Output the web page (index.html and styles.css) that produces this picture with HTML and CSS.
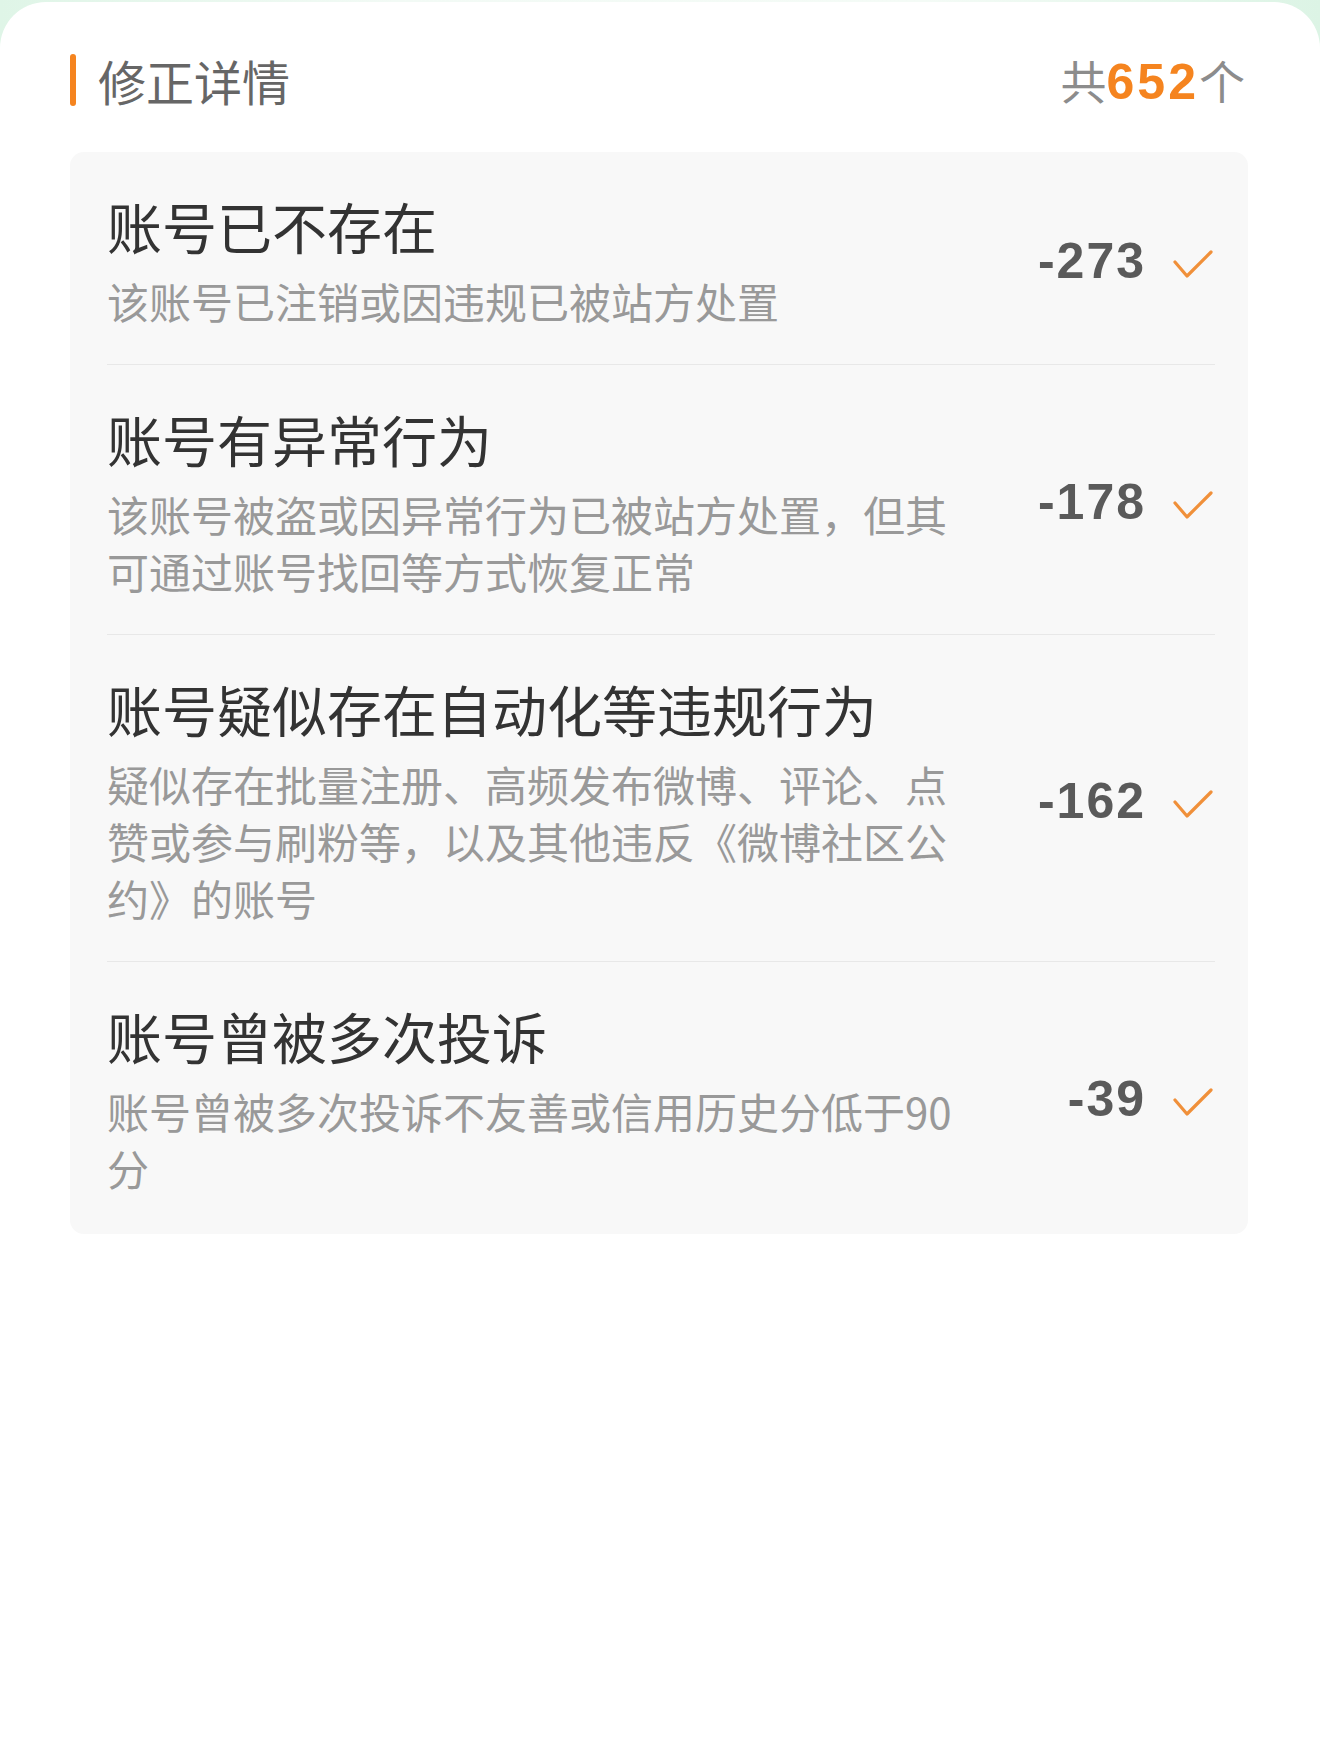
FILE: index.html
```html
<!DOCTYPE html>
<html lang="zh-CN">
<head>
<meta charset="utf-8">
<title>修正详情</title>
<link rel="stylesheet" href="styles.css">
</head>
<body>
<div class="page">
  <div class="header">
    <div class="header-left">
      <span class="bar"></span>
      <span class="header-title">修正详情</span>
    </div>
    <div class="header-right">共<span class="total">652</span>个</div>
  </div>
  <div class="card">
    <div class="row">
      <div class="text">
        <div class="title">账号已不存在</div>
        <div class="desc">该账号已注销或因违规已被站方处置</div>
      </div>
      <div class="value"><span class="num">-273</span><svg class="check" width="40" height="28" viewBox="0 0 40 28"><polyline points="2,12 14,26 38,2" fill="none" stroke="#f0903a" stroke-width="3.2" stroke-linecap="round" stroke-linejoin="round"/></svg></div>
    </div>
    <div class="row">
      <div class="text">
        <div class="title">账号有异常行为</div>
        <div class="desc">该账号被盗或因异常行为已被站方处置，但其可通过账号找回等方式恢复正常</div>
      </div>
      <div class="value"><span class="num">-178</span><svg class="check" width="40" height="28" viewBox="0 0 40 28"><polyline points="2,12 14,26 38,2" fill="none" stroke="#f0903a" stroke-width="3.2" stroke-linecap="round" stroke-linejoin="round"/></svg></div>
    </div>
    <div class="row">
      <div class="text">
        <div class="title">账号疑似存在自动化等违规行为</div>
        <div class="desc">疑似存在批量注册、高频发布微博、评论、点赞或参与刷粉等，以及其他违反《微博社区公约》的账号</div>
      </div>
      <div class="value"><span class="num">-162</span><svg class="check" width="40" height="28" viewBox="0 0 40 28"><polyline points="2,12 14,26 38,2" fill="none" stroke="#f0903a" stroke-width="3.2" stroke-linecap="round" stroke-linejoin="round"/></svg></div>
    </div>
    <div class="row">
      <div class="text">
        <div class="title">账号曾被多次投诉</div>
        <div class="desc">账号曾被多次投诉不友善或信用历史分低于90分</div>
      </div>
      <div class="value"><span class="num">-39</span><svg class="check" width="40" height="28" viewBox="0 0 40 28"><polyline points="2,12 14,26 38,2" fill="none" stroke="#f0903a" stroke-width="3.2" stroke-linecap="round" stroke-linejoin="round"/></svg></div>
    </div>
  </div>
</div>
</body>
</html>
```
FILE: styles.css
```css
html, body {
  margin: 0;
  padding: 0;
}
body {
  background: linear-gradient(90deg, #dff5e7 0%, #f2faf5 30%, #f4fbf6 70%, #dcf4e5 100%);
  padding-top: 2px;
  font-family: "Noto Sans CJK SC", "Noto Sans", sans-serif;
}
.page {
  background: #ffffff;
  border-radius: 46px 46px 0 0;
  min-height: 1757px;
  padding-top: 52px;
  box-sizing: border-box;
}
.header {
  display: flex;
  align-items: center;
  justify-content: space-between;
  height: 52px;
  padding: 0 75px 0 70px;
}
.header-left {
  display: flex;
  align-items: center;
}
.bar {
  display: block;
  width: 6px;
  height: 52px;
  border-radius: 3px;
  background: #f5841f;
}
.header-title {
  margin-left: 22px;
  font-size: 48px;
  line-height: 52px;
  color: #666666;
}
.header-right {
  font-size: 46px;
  line-height: 52px;
  color: #8c8c8c;
}
.total {
  font-family: "Liberation Sans", Arial, sans-serif;
  font-weight: bold;
  font-size: 50px;
  letter-spacing: 3px;
  color: #f5841f;
}
.card {
  margin: 46px 72px 0 70px;
  background: #f8f8f8;
  border-radius: 14px;
  padding: 0 33px 0 37px;
}
.row {
  display: flex;
  align-items: center;
  justify-content: space-between;
  padding: 40px 0 35px;
  border-bottom: 1px solid #e8e8e8;
}
.row:last-child {
  border-bottom: none;
  padding-bottom: 38px;
}
.text {
  width: 860px;
}
.title {
  font-size: 55px;
  line-height: 66px;
  color: #333333;
}
.desc {
  margin-top: 14px;
  font-size: 42px;
  line-height: 57px;
  color: #999999;
}
.value {
  display: flex;
  align-items: center;
  margin-right: 2px;
}
.num {
  font-family: "Liberation Sans", Arial, sans-serif;
  font-weight: bold;
  font-size: 50px;
  letter-spacing: 2px;
  color: #5a5a5a;
  margin-right: 27px;
}
.check {
  display: block;
  margin-top: 6px;
}
```
